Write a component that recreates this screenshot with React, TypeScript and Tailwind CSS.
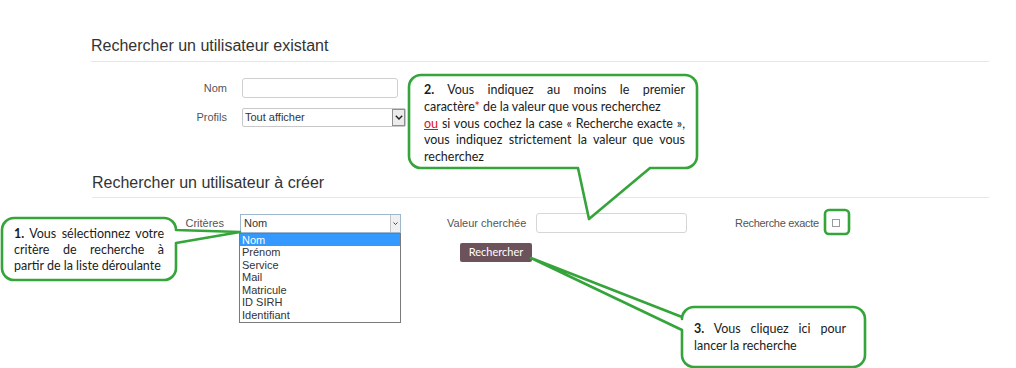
import React from 'react';

const GREEN = '#35a43a';

const criteria = ['Nom', 'Prénom', 'Service', 'Mail', 'Matricule', 'ID SIRH', 'Identifiant'];

const Chevron = ({ className }: { className?: string }) => (
    <svg viewBox="0 0 10 6" className={className} fill="none" stroke="currentColor" strokeWidth="1.8">
        <path d="M1 1l4 4 4-4" />
    </svg>
);

// une ligne justifiée jusqu'au bout
const J = ({ children }: { children: React.ReactNode }) => (
    <div className="text-justify [text-align-last:justify]">{children}</div>
);

// bulles d'aide dessinées par-dessus la page
const Callouts = () => (
    <>
        <svg className="pointer-events-none absolute left-0 top-0" width="1016" height="368" viewBox="0 0 1016 368">
            <g fill="#fff" stroke={GREEN} strokeWidth="2.6" strokeLinejoin="round">
                <path d="M421 75 H685 A12 12 0 0 1 697 87 V156 A12 12 0 0 1 685 168 H650 L589 219 L578 168 H421 A12 12 0 0 1 409 156 V87 A12 12 0 0 1 421 75 Z" />
                <path d="M14 218 H164 A12 12 0 0 1 176 230 L240 232 L176 243 V268 A12 12 0 0 1 164 280 H14 A12 12 0 0 1 2 268 V230 A12 12 0 0 1 14 218 Z" />
                <path d="M694 307 H853 A12 12 0 0 1 865 319 V355 A12 12 0 0 1 853 367 H694 A12 12 0 0 1 682 355 V330 L531 258 L682 317 V319 A12 12 0 0 1 694 307 Z" />
                <rect x="825" y="210" width="24" height="24" rx="4" fill="none" />
            </g>
        </svg>

        <div className="absolute left-[424px] top-[82px] w-[261px] text-[12.5px] leading-[16.8px] text-[#1b1b1b] font-['Lato',sans-serif]">
            <J><b>2.</b> Vous indiquez au moins le premier</J>
            <div>caractère<span className="text-[#e01010]">*</span> de la valeur que vous recherchez</div>
            <J><span className="text-[#e01010] underline">ou</span> si vous cochez la case « Recherche exacte »,</J>
            <J>vous indiquez strictement la valeur que vous</J>
            <div>recherchez</div>
        </div>

        <div className="absolute left-[14px] top-[226px] w-[150px] text-[12.5px] leading-[16px] text-[#1b1b1b] font-['Lato',sans-serif]">
            <J><b>1.</b> Vous sélectionnez votre</J>
            <J>critère de recherche à</J>
            <div>partir de la liste déroulante</div>
        </div>

        <div className="absolute left-[694px] top-[321px] w-[152px] text-[12.5px] leading-[16.5px] text-[#1b1b1b] font-['Lato',sans-serif]">
            <J><b>3.</b> Vous cliquez ici pour</J>
            <div>lancer la recherche</div>
        </div>
    </>
);

const App = () => {
    return (
        <div className="relative h-[368px] w-[1016px] overflow-hidden bg-white font-['Liberation_Sans',Arial,sans-serif] text-[11px] text-[#555]">
            <div className="pl-[91px] pr-[27px] pt-[36px]">
                <h2 className="border-b border-[#e8e8e8] pb-[5px] text-[16px] leading-[20px] text-[#333]">Rechercher un utilisateur existant</h2>

                <div className="mt-[16px] flex flex-col gap-[10px]">
                    <div className="flex items-center">
                        <label className="w-[136px] text-right">Nom</label>
                        <input className="ml-[15px] h-[20px] w-[156px] rounded-[3px] border border-[#cfcfcf] bg-white" />
                    </div>
                    <div className="flex items-center">
                        <label className="w-[136px] text-right">Profils</label>
                        <div className="ml-[15px] flex h-[19px] w-[164px] items-center rounded-[2px] border border-[#c8c8c8] bg-white">
                            <span className="flex-1 pl-[2px] text-[#333]">Tout afficher</span>
                            <span className="flex h-[17px] w-[13px] items-center justify-center border border-[#8f8f8f] bg-[#ececec] text-[#222]">
                                <Chevron className="w-[8px]" />
                            </span>
                        </div>
                    </div>
                </div>

                <h2 className="ml-[1px] mt-[46px] border-b border-[#e8e8e8] pb-[4px] text-[16px] leading-[20px] text-[#333]">Rechercher un utilisateur à créer</h2>

                <div className="ml-[1px] mt-[15px] flex items-center">
                    <label className="w-[132px] text-right">Critères</label>
                    <div className="relative ml-[16px]">
                        <div className="flex h-[19px] w-[161px] items-center border border-[#9fb6cf] bg-white">
                            <span className="flex-1 pl-[3px] text-[#333]">Nom</span>
                            <span className="flex h-[17px] w-[10px] items-center justify-center border-l border-[#c6c6c6] bg-[#f0f0f0] text-[#333]">
                                <Chevron className="w-[5px]" />
                            </span>
                        </div>
                        <ul className="absolute left-[-1px] top-[19px] w-[162px] border border-[#7a7a7a] bg-white pb-[1px] leading-[12.5px] text-[#333]">
                            {criteria.map((c, i) => (
                                <li key={c} className={i === 0 ? 'bg-[#3399ff] pl-[2px] text-white' : 'pl-[2px]'}>{c}</li>
                            ))}
                        </ul>
                    </div>
                    <label className="ml-[46px] w-[89px]">Valeur cherchée</label>
                    <input className="h-[20px] w-[151px] rounded-[3px] border border-[#d6d6d6] bg-white" />
                    <label className="ml-[48px] w-[90px] whitespace-nowrap tracking-[-0.3px]">Recherche exacte</label>
                    <span className="ml-[7px] h-[8px] w-[8px] border border-[#9a9a9a] bg-white" />
                </div>

                <button className="ml-[369px] mt-[10px] h-[19px] w-[72px] rounded-[2px] bg-[#6b525b] text-[11px] text-white font-['Lato',sans-serif]">
                    Rechercher
                </button>
            </div>

            <Callouts />
        </div>
    );
};

export default App;
